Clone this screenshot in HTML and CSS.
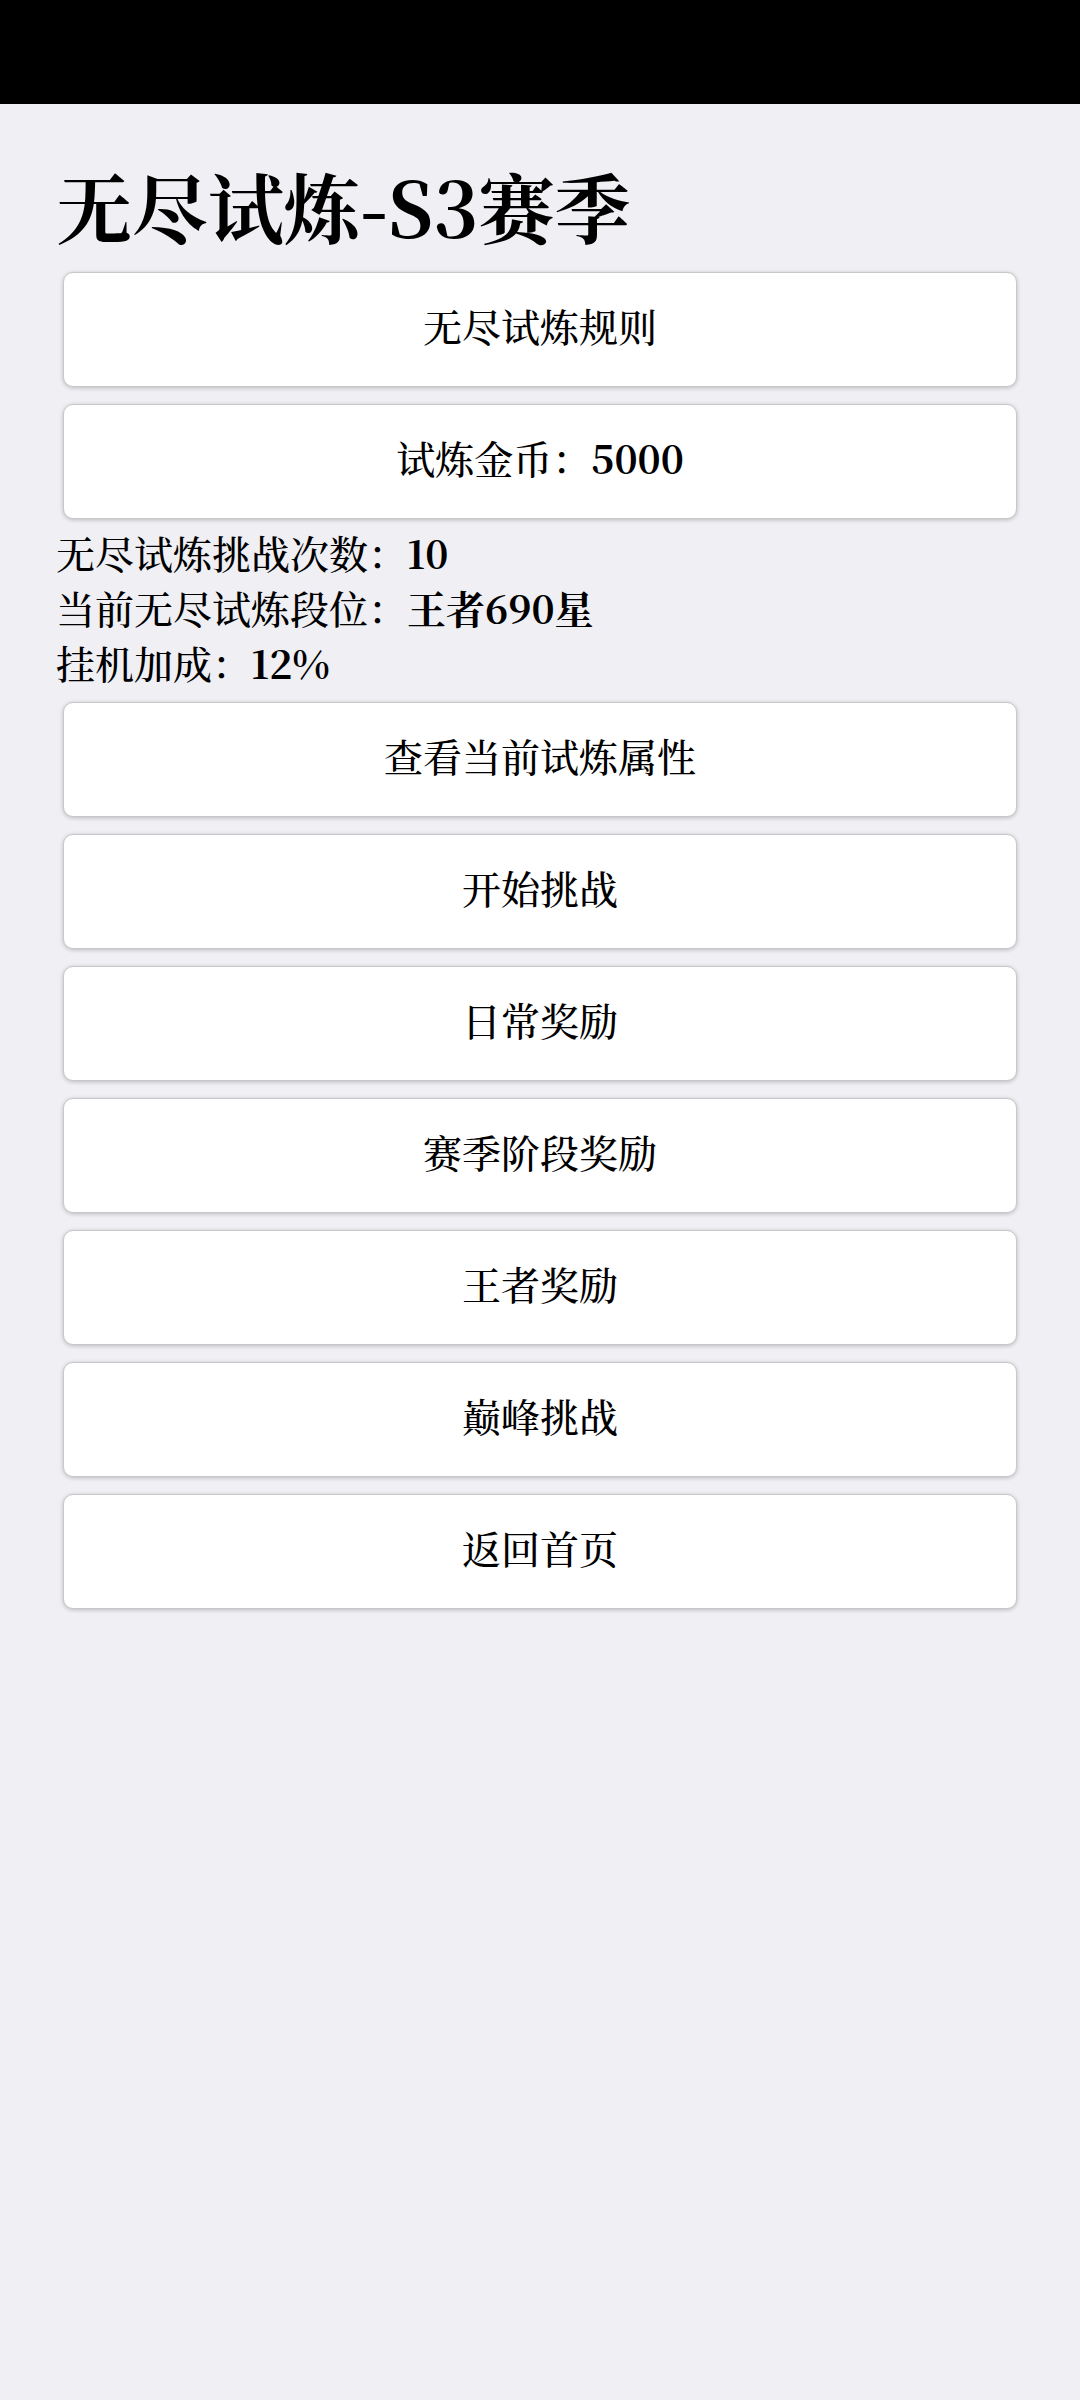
FILE: index.html
```html
<!DOCTYPE html>
<html lang="zh-CN">
<head>
<meta charset="utf-8">
<title>无尽试炼-S3赛季</title>
<link rel="stylesheet" href="styles.css">
</head>
<body>
<div class="statusbar"></div>
<main class="page">
  <h1 class="title">无尽试炼-S3赛季</h1>
  <div class="actions top">
    <button class="btn">无尽试炼规则</button>
    <button class="btn">试炼金币：<b>5000</b></button>
  </div>
  <div class="info">
    <div class="line">无尽试炼挑战次数：<b>10</b></div>
    <div class="line">当前无尽试炼段位：<b>王者690星</b></div>
    <div class="line">挂机加成：<b>12%</b></div>
  </div>
  <div class="actions">
    <button class="btn">查看当前试炼属性</button>
    <button class="btn">开始挑战</button>
    <button class="btn">日常奖励</button>
    <button class="btn">赛季阶段奖励</button>
    <button class="btn">王者奖励</button>
    <button class="btn">巅峰挑战</button>
    <button class="btn">返回首页</button>
  </div>
</main>
</body>
</html>
```

FILE: styles.css
```css
html, body {
  margin: 0;
  padding: 0;
}
body {
  background: #efeff4;
  color: #000;
  font-family: "Noto Serif CJK SC", "Liberation Serif", "Noto Sans CJK SC", serif;
  font-size: 39px;
  font-weight: 500;
  line-height: 55px;
  min-height: 2400px;
}
.statusbar {
  height: 104px;
  background: #000;
}
.page {
  padding: 45px 56px 0;
}
.title {
  margin: 0;
  font-size: 76px;
  line-height: 113px;
  font-weight: bold;
}
.actions {
  display: flex;
  flex-direction: column;
  gap: 17px;
  margin: 0 7px;
}
.actions.top {
  margin-top: 10px;
}
.btn {
  box-sizing: border-box;
  height: 115px;
  width: 100%;
  margin: 0;
  padding: 0 0 8px;
  background: #fff;
  border: 1px solid #c8c8c8;
  border-radius: 10px;
  box-shadow: 0 1px 4px rgba(0, 0, 0, 0.22);
  font: inherit;
  color: #000;
  text-align: center;
}
.btn b, .line b {
  font-weight: bold;
}
.info {
  margin: 6px 0 12px;
}
.line {
  line-height: 55px;
}
```
